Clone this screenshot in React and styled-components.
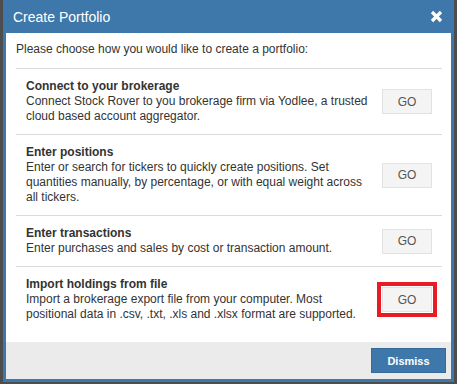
import React from "react";
import styled, { createGlobalStyle } from "styled-components";

const GlobalStyle = createGlobalStyle`
  html, body {
    margin: 0;
    padding: 0;
    background: #4d4d4d;
    overflow: hidden;
  }
  * {
    box-sizing: border-box;
  }
`;

const Window = styled.div`
  width: 451px;
  margin-left: 3px;
  background: #fff;
  border: 3px solid #3e78ab;
  border-top: none;
  font-family: "Liberation Sans", Arial, sans-serif;
  color: #333;
`;

const Header = styled.div`
  height: 33px;
  margin: 0 -3px;
  padding: 0 11px 0 10px;
  background: #3e78ab;
  display: flex;
  align-items: center;
  justify-content: space-between;
`;

const Title = styled.h2`
  margin: 0;
  font-size: 14px;
  font-weight: normal;
  color: #fff;
`;

const Close = styled.button`
  border: none;
  background: none;
  padding: 0;
  width: 13px;
  height: 13px;
  display: flex;
  cursor: pointer;
`;

const Body = styled.div`
  padding: 9px 9px 10px 10px;
`;

const Intro = styled.p`
  margin: 0 0 11px;
  font-size: 12px;
  line-height: 15px;
`;

const Option = styled.div`
  border-top: 1px solid #dadada;
  padding: 10px;
  display: flex;
  align-items: center;
  gap: 10px;
`;

const OptionText = styled.div`
  flex: 1;
  font-size: 12px;
  line-height: 15px;
`;

const OptionTitle = styled.div`
  font-weight: bold;
`;

const GoButton = styled.button`
  width: 50px;
  height: 25px;
  flex-shrink: 0;
  background: #f4f4f4;
  border: 1px solid #e2e2e2;
  border-radius: 0;
  font-family: inherit;
  font-size: 12px;
  color: #555;
  cursor: pointer;
  outline: ${(p) => (p.$marked ? "4px solid #e81c24" : "none")};
  outline-offset: 1px;
`;

const Footer = styled.div`
  height: 37px;
  background: #ebebeb;
  display: flex;
  align-items: center;
  justify-content: flex-end;
  padding-right: 5px;
`;

const Dismiss = styled.button`
  width: 75px;
  height: 25px;
  background: #3e78ab;
  border: 1px solid #356a9a;
  border-radius: 0;
  color: #fff;
  font-family: inherit;
  font-size: 11px;
  font-weight: bold;
  cursor: pointer;
`;

const options = [
  {
    title: "Connect to your brokerage",
    text: "Connect Stock Rover to you brokerage firm via Yodlee, a trusted cloud based account aggregator.",
  },
  {
    title: "Enter positions",
    text: "Enter or search for tickers to quickly create positions. Set quantities manually, by percentage, or with equal weight across all tickers.",
  },
  {
    title: "Enter transactions",
    text: "Enter purchases and sales by cost or transaction amount.",
  },
  {
    title: "Import holdings from file",
    text: "Import a brokerage export file from your computer. Most positional data in .csv, .txt, .xls and .xlsx format are supported.",
    marked: true,
  },
];

function App() {
  return (
    <>
      <GlobalStyle />
      <Window>
        <Header>
          <Title>Create Portfolio</Title>
          <Close>
            <svg width="13" height="13" viewBox="0 0 13 13">
              <path d="M2 2 L11 11 M11 2 L2 11" stroke="#fff" strokeWidth="3.2" />
            </svg>
          </Close>
        </Header>
        <Body>
          <Intro>Please choose how you would like to create a portfolio:</Intro>
          {options.map((item) => (
            <Option key={item.title}>
              <OptionText>
                <OptionTitle>{item.title}</OptionTitle>
                {item.text}
              </OptionText>
              <GoButton $marked={item.marked}>GO</GoButton>
            </Option>
          ))}
        </Body>
        <Footer>
          <Dismiss>Dismiss</Dismiss>
        </Footer>
      </Window>
    </>
  );
}

export default App;
